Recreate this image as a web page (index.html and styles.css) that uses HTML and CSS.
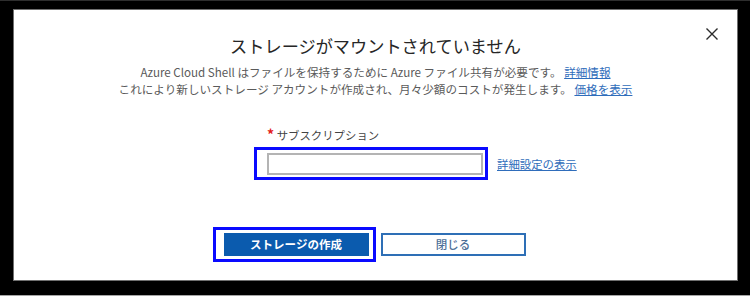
FILE: index.html
```html
<!DOCTYPE html>
<html lang="ja">
<head>
<meta charset="utf-8">
<title>ストレージがマウントされていません</title>
<link rel="stylesheet" href="styles.css">
</head>
<body>
<div class="frame">
  <div class="panel">
    <button class="close" aria-label="閉じる">
      <svg width="12" height="12" viewBox="0 0 12 12"><path d="M0.5 0.5 L11.5 11.5 M11.5 0.5 L0.5 11.5" stroke="#2b2b2b" stroke-width="1.4" fill="none"/></svg>
    </button>
    <h1 class="title">ストレージがマウントされていません</h1>
    <p class="desc">Azure Cloud Shell はファイルを保持するために Azure ファイル共有が必要です。 <a href="#" class="link">詳細情報</a><br>これにより新しいストレージ アカウントが作成され、月々少額のコストが発生します。 <a href="#" class="link">価格を表示</a></p>
    <div class="form">
      <label class="label"><span class="req">*</span> サブスクリプション</label>
      <div class="field-row">
        <span class="input hl hl-input"></span>
        <a href="#" class="link">詳細設定の表示</a>
      </div>
    </div>
    <div class="actions">
      <button class="btn primary hl hl-btn">ストレージの作成</button>
      <button class="btn secondary">閉じる</button>
    </div>
  </div>
</div>
</body>
</html>
```

FILE: styles.css
```css
html, body {
  margin: 0;
  padding: 0;
  background: #000;
}
body {
  font-family: "Noto Sans CJK JP", "Noto Sans", sans-serif;
}
.frame {
  box-sizing: border-box;
  width: 750px;
  height: 296px;
  border-top: 1px solid #2e2e2e;
  border-bottom: 1px solid #a5a5a5;
  padding: 8px 12px 14px 13px;
  display: flex;
}
.panel {
  position: relative;
  flex: 1;
  background: #fff;
  border: 1px solid #707070;
  display: flex;
  flex-direction: column;
  align-items: center;
}
.close {
  position: absolute;
  top: 18px;
  right: 19px;
  width: 12px;
  height: 12px;
  padding: 0;
  border: 0;
  background: none;
  display: flex;
}
.title {
  margin: 24px 0 0;
  font-size: 17.2px;
  line-height: 24px;
  font-weight: 400;
  color: #262626;
}
.desc {
  margin: 6px 0 0;
  font-size: 11.6px;
  line-height: 16.5px;
  color: #5a5a5a;
  text-align: center;
}
.link {
  color: #2f6dbb;
  text-decoration: underline;
}
.form {
  align-self: flex-start;
  margin: 29px 0 0 253px;
  display: flex;
  flex-direction: column;
}
.label {
  font-size: 11.4px;
  line-height: 16px;
  color: #444;
}
.req {
  color: #e31b1b;
  font-size: 14px;
  font-weight: 700;
}
.field-row {
  margin-top: 10px;
  display: flex;
  align-items: center;
  gap: 14px;
  font-size: 11.4px;
}
.input {
  box-sizing: border-box;
  width: 216px;
  height: 22px;
  border: 2px solid #b4b4b4;
  background: #fff;
}
.hl {
  position: relative;
}
.hl::before {
  content: "";
  position: absolute;
  border: 3px solid #0a0aff;
  pointer-events: none;
}
.hl-input::before {
  left: -15px;
  right: -7px;
  top: -8px;
  bottom: -7px;
}
.hl-btn::before {
  left: -12px;
  right: -8px;
  top: -7px;
  bottom: -7px;
}
.actions {
  margin: 58px 2px 0 0;
  display: flex;
  gap: 12px;
}
.btn {
  box-sizing: border-box;
  width: 145px;
  height: 23px;
  padding: 0;
  font-family: inherit;
  font-size: 11.5px;
  line-height: 1;
}
.primary {
  background: #0b5bae;
  border: 1px solid #0b5bae;
  color: #fff;
  font-weight: 700;
}
.secondary {
  background: #fff;
  border: 2px solid #2e6fb6;
  color: #4d6f98;
  font-weight: 500;
}
```
